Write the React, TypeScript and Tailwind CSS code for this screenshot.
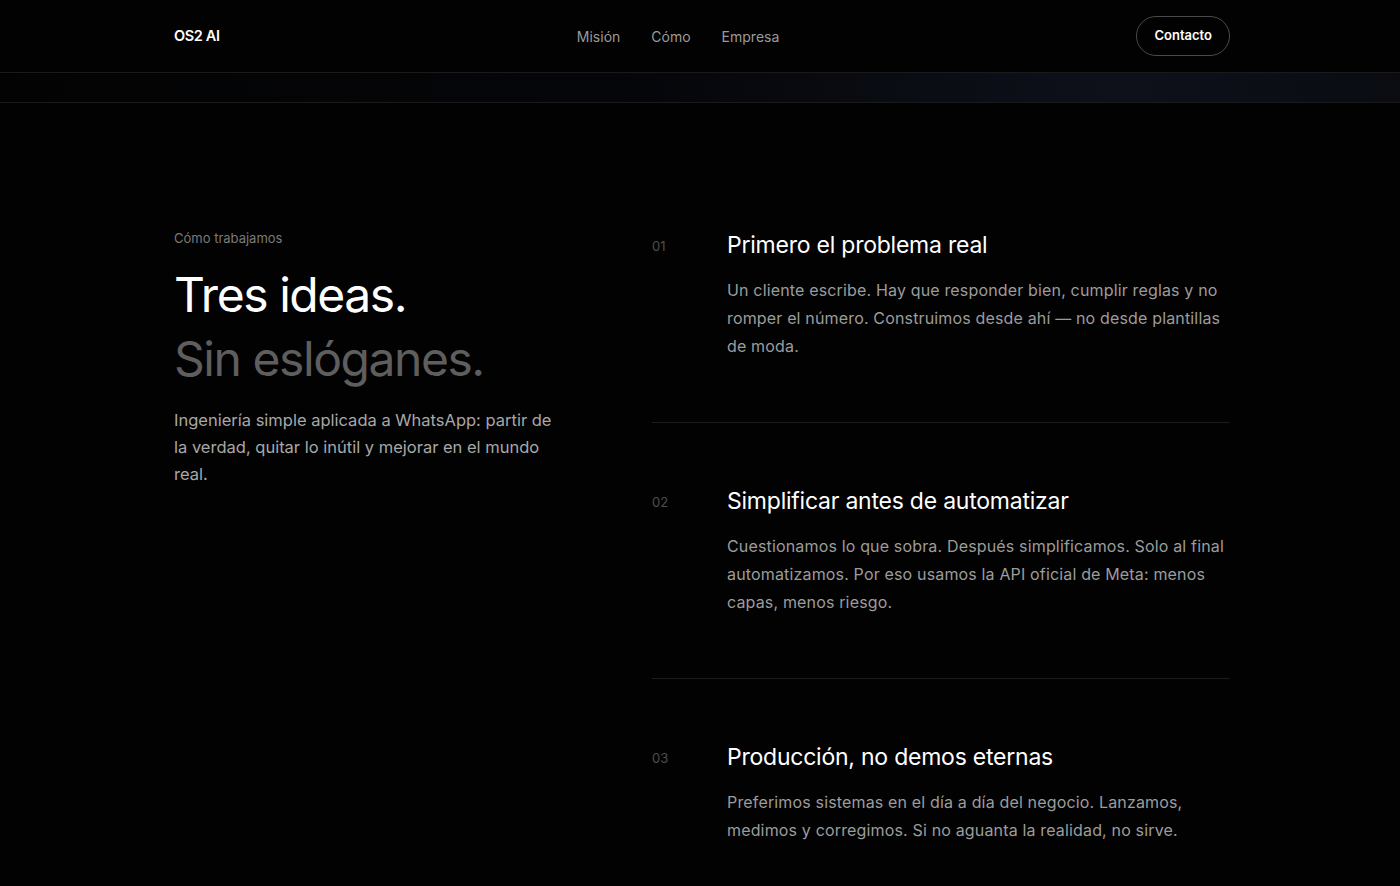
import React from "react";

const items = [
  {
    n: "01",
    title: "Primero el problema real",
    body: "Un cliente escribe. Hay que responder bien, cumplir reglas y no romper el número. Construimos desde ahí — no desde plantillas de moda.",
  },
  {
    n: "02",
    title: "Simplificar antes de automatizar",
    body: "Cuestionamos lo que sobra. Después simplificamos. Solo al final automatizamos. Por eso usamos la API oficial de Meta: menos capas, menos riesgo.",
  },
  {
    n: "03",
    title: "Producción, no demos eternas",
    body: "Preferimos sistemas en el día a día del negocio. Lanzamos, medimos y corregimos. Si no aguanta la realidad, no sirve.",
  },
];

const Header = () => (
  <header className="border-b border-[#1a1a1a]">
    <div className="mx-auto flex h-[72px] max-w-[1060px] items-center justify-between pl-[4px]">
      <a className="text-[14.5px] font-semibold tracking-tight text-white">OS2 AI</a>
      <nav className="flex items-center gap-[31px] text-[14px] text-[#9a9a9a]">
        <a>Misión</a>
        <a>Cómo</a>
        <a>Empresa</a>
      </nav>
      <button className="h-10 rounded-full border border-[#4a4a4a] px-[17px] text-[13px] font-semibold text-white">
        Contacto
      </button>
    </div>
  </header>
);

export default function App() {
  return (
    <div
      className="min-h-screen bg-[#020202] text-white"
      style={{ fontFamily: "Inter, 'Noto Sans', sans-serif" }}
    >
      <Header />
      {/* glow strip */}
      <div className="h-[30px] border-b border-[#1a1a1a] bg-[linear-gradient(90deg,#030303_0%,#05060a_45%,#0e111a_80%,#0a0c12_100%)]" />

      <section className="mx-auto grid max-w-[1060px] grid-cols-[438px_1fr] gap-10 pl-[4px] pt-[126px]">
        <div>
          <p className="text-[13px] text-[#7a7a7a]">Cómo trabajamos</p>
          <h2 className="mt-[14px] text-[48px] leading-[64px] tracking-[-0.03em]">
            <span className="block text-white">Tres ideas.</span>
            <span className="block text-[#5e5e5e]">Sin eslóganes.</span>
          </h2>
          <p className="mt-[16px] max-w-[380px] text-[16.5px] leading-[27px] text-[#a8a8a8]">
            Ingeniería simple aplicada a WhatsApp: partir de la verdad, quitar lo inútil y mejorar en el mundo real.
          </p>
        </div>

        <div className="mt-[1px]">
          {items.map((it, i) => (
            <div
              key={it.n}
              className={`grid grid-cols-[75px_1fr] ${i > 0 ? "border-t border-[#1c1c1c] pt-[63px]" : ""} ${i < items.length - 1 ? "pb-[62px]" : ""}`}
            >
              <span className="pt-[7px] text-[13px] text-[#4e4e4e]">{it.n}</span>
              <div>
                <h3 className="text-[23px] leading-[30px] tracking-[-0.01em] text-white">{it.title}</h3>
                <p className="mt-[16px] text-[16px] leading-[28px] tracking-[0.01em] text-[#9c9c9c]">{it.body}</p>
              </div>
            </div>
          ))}
        </div>
      </section>
    </div>
  );
}
